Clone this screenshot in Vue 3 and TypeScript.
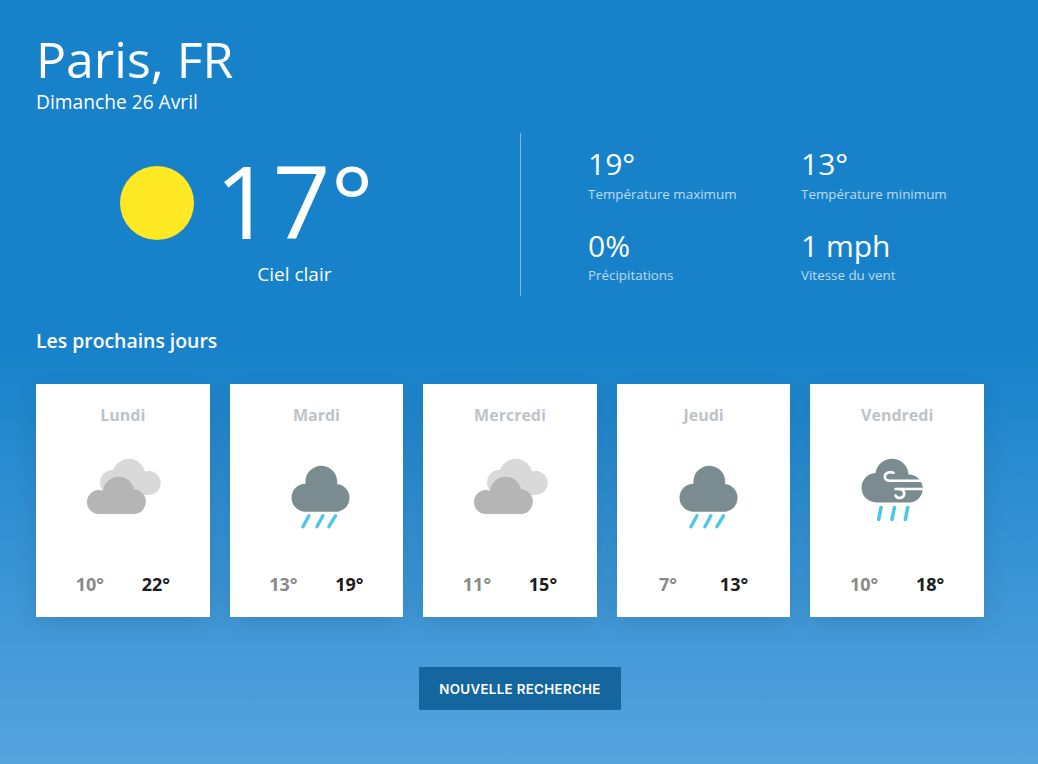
<script setup lang="ts">
interface Day { name: string; low: number; high: number; icon: 'clouds' | 'rain' | 'wind' }
const days: Day[] = [
  { name: 'Lundi', low: 10, high: 22, icon: 'clouds' },
  { name: 'Mardi', low: 13, high: 19, icon: 'rain' },
  { name: 'Mercredi', low: 11, high: 15, icon: 'clouds' },
  { name: 'Jeudi', low: 7, high: 13, icon: 'rain' },
  { name: 'Vendredi', low: 10, high: 18, icon: 'wind' },
]
const stats = [
  { value: '19°', label: 'Température maximum' },
  { value: '13°', label: 'Température minimum' },
  { value: '0%', label: 'Précipitations' },
  { value: '1 mph', label: 'Vitesse du vent' },
]
</script>

<template>
  <main class="page">
    <header class="head">
      <h1 class="city">Paris, FR</h1>
      <p class="date">Dimanche 26 Avril</p>
    </header>

    <section class="hero">
      <div class="now">
        <svg class="sun" width="74" height="74" viewBox="0 0 74 74"><circle cx="37" cy="37" r="37" fill="#ffe824" /></svg>
        <div class="now-text">
          <span class="temp">17°</span>
          <p class="sky">Ciel clair</p>
        </div>
      </div>
      <div class="stats">
        <div v-for="s in stats" :key="s.label" class="stat">
          <span class="stat-value">{{ s.value }}</span>
          <span class="stat-label">{{ s.label }}</span>
        </div>
      </div>
    </section>

    <h2 class="next">Les prochains jours</h2>

    <section class="cards">
      <article v-for="d in days" :key="d.name" class="card">
        <h3 class="day">{{ d.name }}</h3>
        <svg class="icon" width="100" height="100" viewBox="0 0 100 100">
          <template v-if="d.icon === 'clouds'">
            <path d="M39 50A12.5 12.5 0 0 1 40 25A16.7 16.7 0 0 1 72 26.6A12 12 0 1 1 76 50Z" fill="#d9d9d9" />
            <path d="M26 69A12 12 0 1 1 30 45.7A15.7 15.7 0 0 1 61 44.3A12.4 12.4 0 0 1 62 69Z" fill="#b5b5b5" />
          </template>
          <template v-else-if="d.icon === 'rain'">
            <path d="M39.5 66.7A14 14 0 0 1 39.5 38.7A15.9 15.9 0 1 1 71 39A14 14 0 0 1 72 66.7Z" fill="#7a8c90" />
            <g stroke="#4cc8e2" stroke-width="3.4" stroke-linecap="round" fill="none">
              <path d="M42.9 70.7L36.9 81.7" /><path d="M56.9 70.7L50.9 81.7" /><path d="M69.6 70.7L62.9 81.7" />
            </g>
          </template>
          <template v-else>
            <path d="M30 57.4A14.7 14.7 0 0 1 28.5 28A16.6 16.6 0 0 1 61.5 29.5A14 14 0 0 1 63.4 57.4Z" fill="#7a8c90" />
            <g stroke="#fff" stroke-width="2.6" stroke-linecap="round" fill="none">
              <path d="M46.5 27.8C44 26.6 38 27 37.8 31.5C37.7 34.5 40 35.8 43 35.8H79" />
              <path d="M48.5 44H79" />
              <path d="M52 44C56 44 58 47 57 50C55.5 54 50 54 48.5 50.5" />
            </g>
            <g stroke="#4cc8e2" stroke-width="3.6" stroke-linecap="round" fill="none">
              <path d="M34 62.5L31.7 74.5" /><path d="M47.4 62.5L45 74.5" /><path d="M60.7 62.5L58.4 74.5" />
            </g>
          </template>
        </svg>
        <div class="range">
          <span class="low">{{ d.low }}°</span>
          <span class="high">{{ d.high }}°</span>
        </div>
      </article>
    </section>

    <div class="action">
      <button class="search" type="button">NOUVELLE RECHERCHE</button>
    </div>
  </main>
</template>

<style scoped>
.page {
  box-sizing: border-box;
  height: 764px;
  padding: 29px 36px 0;
  color: #fff;
  font-family: "Open Sans", sans-serif;
  background: linear-gradient(to bottom, #1782ca 0%, #1782ca 45%, #56a3dd 100%);
  overflow: hidden;
}
.head { height: 104px; }
.city { margin: 0; font-size: 50px; font-weight: 400; line-height: 60px; }
.date { margin: 1px 0 0; font-size: 19.2px; line-height: 24px; }
.hero { display: flex; height: 163px; }
.now { flex: none; width: 485px; box-sizing: border-box; border-right: 1px solid rgba(255,255,255,.45); display: flex; align-items: flex-start; padding-left: 84px; }
.sun { display: block; flex: none; margin-top: 33px; }
.now-text { display: flex; flex-direction: column; align-items: center; margin-left: 21px; margin-top: 5px; }
.temp { font-size: 101px; font-weight: 400; line-height: 124px; }
.sky { margin: 0; font-size: 19px; line-height: 24px; }
.stats { flex: none; display: grid; grid-template-columns: 213px 213px; grid-auto-rows: 81.5px; margin-left: 67px; padding-top: 13px; }
.stat { display: flex; flex-direction: column; }
.stat-value { font-size: 30px; line-height: 36px; }
.stat-label { font-size: 13.4px; line-height: 20px; margin-top: 1.5px; color: rgba(255,255,255,.72); }
.next { margin: 30px 0 0; font-size: 19.4px; font-weight: 600; line-height: 30px; }
.cards { display: grid; grid-template-columns: repeat(5, 173.6px); gap: 20px; margin-top: 28px; }
.card { height: 233px; background: #fff; box-shadow: 0 6px 22px rgba(0,0,0,.1); display: flex; flex-direction: column; align-items: center; }
.day { margin: 20px 0 0; font-size: 16px; font-weight: 700; line-height: 22px; color: #bdc3c7; }
.icon { display: block; flex: none; margin-top: 19px; }
.range { display: flex; justify-content: space-around; width: 132px; margin-top: auto; margin-bottom: 21px; font-size: 18px; font-weight: 700; line-height: 24px; }
.low { color: #8a8a8a; }
.high { color: #1c1c1c; }
.action { display: flex; justify-content: center; margin-top: 50px; padding-left: 2px; }
.search { width: 202px; height: 43px; border: 0; background: #15669f; color: #fff; font-family: Inter, sans-serif; font-size: 13.33px; font-weight: 600; letter-spacing: .33px; }
</style>
